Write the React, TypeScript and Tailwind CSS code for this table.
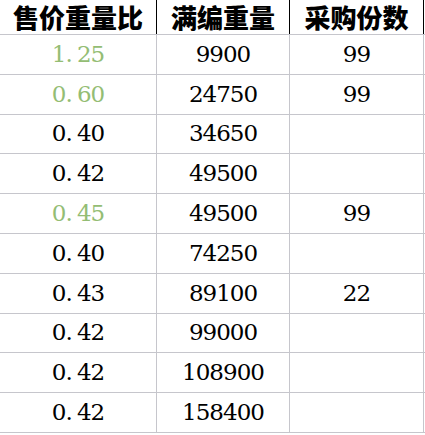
import React from 'react';

type Row = { ratio: string; weight: string; qty: string; green?: boolean };

const rows: Row[] = [
  { ratio: '1.25', weight: '9900', qty: '99', green: true },
  { ratio: '0.60', weight: '24750', qty: '99', green: true },
  { ratio: '0.40', weight: '34650', qty: '' },
  { ratio: '0.42', weight: '49500', qty: '' },
  { ratio: '0.45', weight: '49500', qty: '99', green: true },
  { ratio: '0.40', weight: '74250', qty: '' },
  { ratio: '0.43', weight: '89100', qty: '22' },
  { ratio: '0.42', weight: '99000', qty: '' },
  { ratio: '0.42', weight: '108900', qty: '' },
  { ratio: '0.42', weight: '158400', qty: '' },
];

// SimSun-style number: the dot takes a full half-em cell
function Ratio({ value }: { value: string }) {
  const [a, b] = value.split('.');
  return (
    <span>
      {a}
      <span className="inline-block w-[0.5em]">.</span>
      {b}
    </span>
  );
}

export default function App() {
  return (
    <div className="w-[425px] h-[435px] bg-white overflow-hidden">
      <div className="grid grid-cols-[157px_133px_134px] h-[35px] border-b border-[#c6c6cc] font-['Noto_Sans_CJK_SC'] font-black text-[26px] text-black">
        <div className="flex items-center justify-center border-r border-black leading-[30px]">售价重量比</div>
        <div className="flex items-center justify-center border-r border-black leading-[30px]">满编重量</div>
        <div className="flex items-center justify-center border-r border-black leading-[30px]">采购份数</div>
      </div>
      {rows.map((r, i) => (
        <div
          key={i}
          className="grid grid-cols-[157px_133px_134px] h-[39.8px] border-b border-[#c6c6cc] font-['DejaVu_Serif'] text-[23px] tracking-[-1px] leading-none text-black"
        >
          <div
            className={`flex items-center justify-center border-r border-[#c6c6cc] ${r.green ? 'text-[#94bd74]' : ''}`}
          >
            <Ratio value={r.ratio} />
          </div>
          <div className="flex items-center justify-center border-r border-[#c6c6cc]">{r.weight}</div>
          <div className="flex items-center justify-center border-r border-[#c6c6cc]">{r.qty}</div>
        </div>
      ))}
    </div>
  );
}
